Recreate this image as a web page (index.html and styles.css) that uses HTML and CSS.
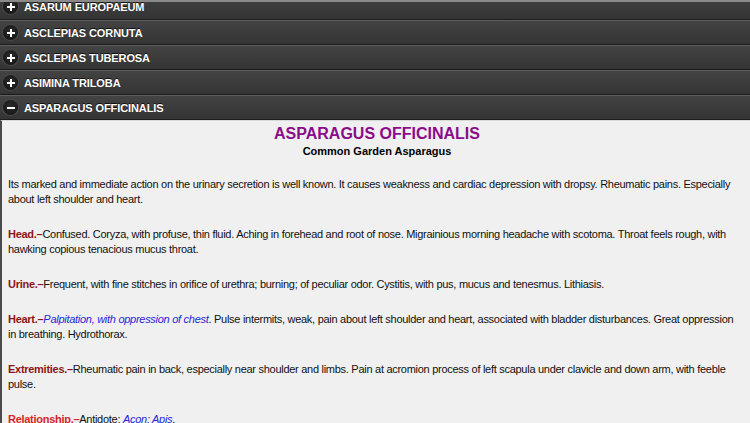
FILE: index.html
```html
<!DOCTYPE html>
<html>
<head>
<meta charset="utf-8">
<link rel="stylesheet" href="styles.css">
</head>
<body>
<div class="viewport">
  <ul class="list">
    <li class="row"><span class="icon plus"></span><span class="name">ASARUM EUROPAEUM</span></li>
    <li class="row"><span class="icon plus"></span><span class="name">ASCLEPIAS CORNUTA</span></li>
    <li class="row"><span class="icon plus"></span><span class="name">ASCLEPIAS TUBEROSA</span></li>
    <li class="row"><span class="icon plus"></span><span class="name">ASIMINA TRILOBA</span></li>
    <li class="row"><span class="icon minus"></span><span class="name">ASPARAGUS OFFICINALIS</span></li>
  </ul>
</div>
<main class="content">
  <h1 class="title">ASPARAGUS OFFICINALIS</h1>
  <h2 class="subtitle">Common Garden Asparagus</h2>
  <p>Its marked and immediate action on the urinary secretion is well known. It causes weakness and cardiac depression with dropsy. Rheumatic pains. Especially about left shoulder and heart.</p>
  <p><b class="lbl">Head.–</b>Confused. Coryza, with profuse, thin fluid. Aching in forehead and root of nose. Migrainious morning headache with scotoma. Throat feels rough, with hawking copious tenacious mucus throat.</p>
  <p><b class="lbl">Urine.–</b>Frequent, with fine stitches in orifice of urethra; burning; of peculiar odor. Cystitis, with pus, mucus and tenesmus. Lithiasis.</p>
  <p><b class="lbl">Heart.–</b><i class="em">Palpitation, with oppression of chest</i>. Pulse intermits, weak, pain about left shoulder and heart, associated with bladder disturbances. Great oppression <span class="nw">in breathing.</span> Hydrothorax.</p>
  <p><b class="lbl">Extremities.–</b>Rheumatic pain in back, especially near shoulder and limbs. Pain at acromion process of left scapula under clavicle and down arm, with feeble pulse.</p>
  <p><b class="lbl rel">Relationship.–</b>Antidote: <i class="em">Acon; Apis</i>.</p>
</main>
</body>
</html>
```
FILE: styles.css
```css
html, body {
  margin: 0;
  padding: 0;
  background: #f0f0f0;
  font-family: "Liberation Sans", Arial, sans-serif;
}
.viewport {
  overflow: hidden;
  border-top: 2px solid #8a8a8a;
  background: #333;
}
.list {
  list-style: none;
  margin: -9px 0 0 0;
  padding: 0;
}
.row {
  height: 23px;
  display: flex;
  align-items: center;
  border-top: 1px solid #5e5e5e;
  border-bottom: 1px solid #1c1c1c;
  background: linear-gradient(#434343, #343434);
}
.list .row:first-child {
  height: 25px;
}
.icon {
  width: 15px;
  height: 15px;
  border-radius: 50%;
  background: radial-gradient(circle at 50% 40%, #2a2a2a, #141414);
  box-shadow: 0 0 0 1px #4a4a4a;
  margin: 0 6px 0 3px;
  display: flex;
  align-items: center;
  justify-content: center;
  position: relative;
  flex: none;
}
.icon::before {
  content: "";
  width: 8px;
  height: 2px;
  background: #fff;
}
.plus::after {
  content: "";
  position: absolute;
  width: 2px;
  height: 8px;
  background: #fff;
}
.name {
  color: #fff;
  font-weight: bold;
  font-size: 11px;
  letter-spacing: -0.1px;
  text-shadow: 0 -1px 0 #111;
}
.content {
  border-left: 2px solid #4a4a4a;
  border-top: 1px solid #d8d8d8;
  padding: 4px 4px 0 6px;
  background: #f0f0f0;
  color: #111;
}
.title {
  margin: 0;
  text-align: center;
  font-size: 16px;
  line-height: 18px;
  color: #8b0b8b;
  font-weight: bold;
}
.subtitle {
  margin: 2px 0 19px 0;
  text-align: center;
  font-size: 11px;
  line-height: 13px;
  font-weight: bold;
  color: #000;
}
.content p {
  margin: 0 0 20px 0;
  font-size: 11px;
  line-height: 15px;
  letter-spacing: -0.28px;
}
.nw {
  white-space: nowrap;
}
.lbl {
  color: #8e1414;
}
.lbl.rel {
  color: #d8262a;
}
.em {
  color: #2626d8;
}
```
